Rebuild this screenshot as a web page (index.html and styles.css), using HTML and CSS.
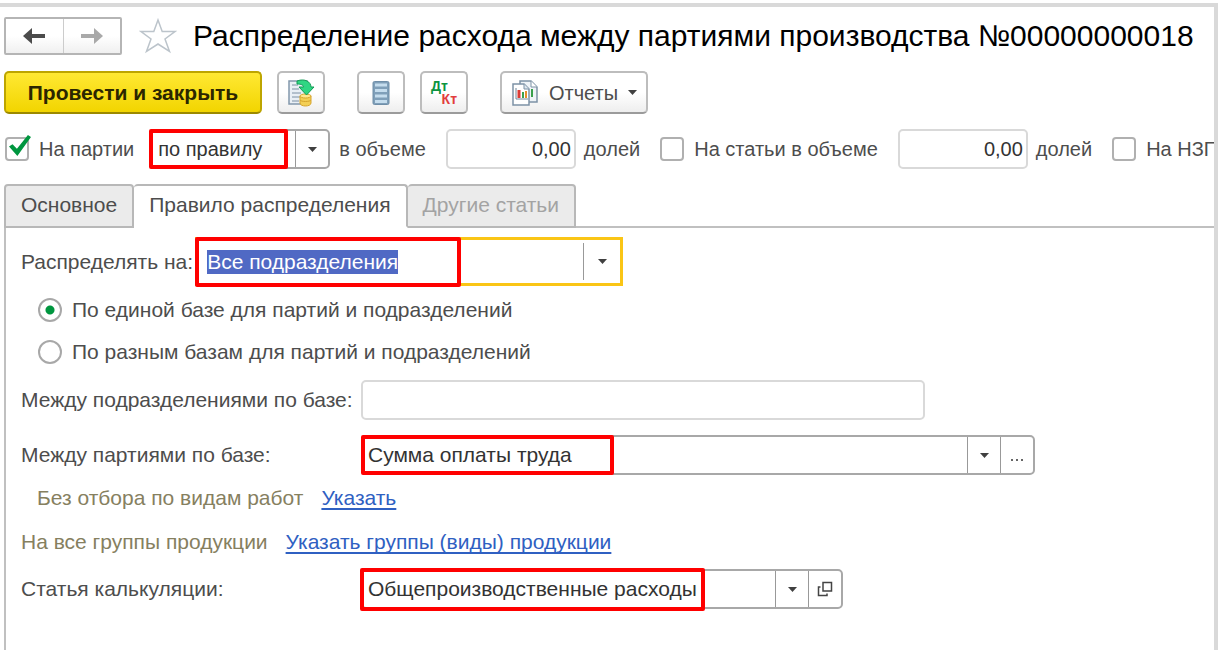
FILE: index.html
```html
<!DOCTYPE html>
<html lang="ru">
<head>
<meta charset="utf-8">
<title>Распределение расхода между партиями производства</title>
<link rel="stylesheet" href="styles.css">
</head>
<body>
<main class="window">
  <header class="header">
    <div class="history">
      <button class="history-btn" type="button" aria-label="Назад">
        <svg width="24" height="18" viewBox="0 0 24 18"><path d="M1 9 10 1V7H23V11H10V17Z" fill="#4b4b4b"/></svg>
      </button>
      <button class="history-btn" type="button" aria-label="Вперед">
        <svg width="24" height="18" viewBox="0 0 24 18"><path d="M23 9 14 1V7H1V11H14V17Z" fill="#a9a9a9"/></svg>
      </button>
    </div>
    <button class="star" type="button" aria-label="В избранное">
      <svg width="38" height="36" viewBox="0 0 38 36"><path d="M19 2 23.200 13.500H36L26 21 30.500 33.500 19 26 7.500 33.500 12 21 2 13.500H14.800Z" fill="#fff" stroke="#bcc4cb" stroke-width="1.500"/></svg>
    </button>
    <h1 class="title">Распределение расхода между партиями производства №00000000018</h1>
  </header>

  <div class="toolbar">
    <button class="btn btn-primary" type="button">Провести и закрыть</button>
    <button class="btn btn-icon" type="button" aria-label="Провести">
      <svg width="28" height="28" viewBox="0 0 28 28">
        <path d="M2 2H20V25H2Z" fill="#e9eff5" stroke="#8398ac" stroke-width="1.500"/>
        <path d="M5 6H11M5 10H12M5 14H14M5 18H13M5 22H12" stroke="#7d90a3"/>
        <path d="M13 17V24C13 28 24 28 24 24V17Z" fill="#f3cf55" stroke="#d6a52e"/>
        <ellipse cx="18.500" cy="17" rx="5.500" ry="2" fill="#ffe88f" stroke="#d6a52e"/>
        <path d="M13 21C14 23 23 23 24 21" fill="none" stroke="#d6a52e"/>
        <path d="M10 2C18 -1 24 3 24 8H27L19.500 16 12 8H16.500C16.500 6 14 5 10 5Z" fill="#2fd683" stroke="#139a55"/>
      </svg>
    </button>
    <button class="btn btn-icon btn-apart" type="button" aria-label="Список">
      <svg width="20" height="26" viewBox="0 0 20 26">
        <rect x="2" y="1.500" width="16" height="23" rx="1.500" fill="#7f9fb9" stroke="#6f8ea8"/>
        <path d="M4 5H16M4 10.500H16M4 16H16M4 21.500H16" stroke="#c5ddee" stroke-width="3"/>
      </svg>
    </button>
    <button class="btn btn-icon" type="button" aria-label="Проводки">
      <span class="dtkt"><span class="dt">Дт</span><span class="kt">Кт</span></span>
    </button>
    <button class="btn btn-reports" type="button">
      <svg width="28" height="28" viewBox="0 0 28 28">
        <path d="M9 2H20L26 8V23H9Z" fill="#eef3f7" stroke="#7d92a6" stroke-width="1.500"/>
        <path d="M20 2V8H26" fill="#fff" stroke="#7d92a6"/>
        <path d="M21 10V18" stroke="#39a04c" stroke-width="2"/>
        <path d="M2 5H13L18 10V26H2Z" fill="#fff" stroke="#7d92a6" stroke-width="1.500"/>
        <path d="M13 5V10H18" fill="#dce6ee" stroke="#7d92a6"/>
        <path d="M5 9V20H17" fill="none" stroke="#71869a"/>
        <path d="M8 11V19" stroke="#dc3c36" stroke-width="3"/>
        <path d="M12 13V19" stroke="#39a04c" stroke-width="2"/>
        <path d="M15 12V19" stroke="#e58e2b" stroke-width="2"/>
      </svg>
      <span>Отчеты</span>
      <svg class="caret" width="9" height="5" viewBox="0 0 9 5"><path d="M0 0H9L4.500 5Z"/></svg>
    </button>
  </div>

  <div class="options">
    <input class="check" type="checkbox" id="to-batches" checked>
    <label class="check-label" for="to-batches">На партии</label>
    <div class="combo combo-rule">
      <select class="rule-select" aria-label="Способ распределения на партии"><option>по правилу</option></select>
      <span class="combo-btn"><svg class="caret" width="9" height="5" viewBox="0 0 9 5"><path d="M0 0H9L4.500 5Z"/></svg></span>
      <span class="mark mark-rule"></span>
    </div>
    <label class="volume-label" for="volume-1">в объеме</label>
    <input class="field amount" id="volume-1" type="text" value="0,00">
    <span class="unit">долей</span>
    <input class="check" type="checkbox" id="to-items">
    <label class="check-label items-label" for="to-items">На статьи в объеме</label>
    <input class="field amount" type="text" value="0,00" aria-label="Объем на статьи">
    <span class="unit">долей</span>
    <input class="check" type="checkbox" id="to-wip">
    <label class="check-label" for="to-wip">На НЗП</label>
  </div>

  <div class="tabs" role="tablist">
    <button class="tab" type="button" role="tab">Основное</button>
    <button class="tab tab-active" type="button" role="tab" aria-selected="true">Правило распределения</button>
    <button class="tab" type="button" role="tab" disabled>Другие статьи</button>
  </div>

  <section class="panel" role="tabpanel">
    <div class="target-row">
      <label for="target">Распределять на:</label>
      <div class="combo combo-target">
        <input class="combo-input" id="target" type="text" value="Все подразделения" autofocus>
        <button class="combo-btn" type="button" aria-label="Выбрать"><svg class="caret" width="9" height="5" viewBox="0 0 9 5"><path d="M0 0H9L4.500 5Z"/></svg></button>
        <span class="mark mark-target"></span>
      </div>
    </div>

    <div class="radios">
      <label class="radio-row"><input class="radio" type="radio" name="base" checked>По единой базе для партий и подразделений</label>
      <label class="radio-row"><input class="radio" type="radio" name="base">По разным базам для партий и подразделений</label>
    </div>

    <div class="form-row">
      <label for="dept-base">Между подразделениями по базе:</label>
      <input class="field dept-field" id="dept-base" type="text">
    </div>

    <div class="form-row">
      <label for="batch-base">Между партиями по базе:</label>
      <div class="combo combo-batch">
        <input class="combo-input" id="batch-base" type="text" value="Сумма оплаты труда">
        <button class="combo-btn" type="button" aria-label="Выбрать"><svg class="caret" width="9" height="5" viewBox="0 0 9 5"><path d="M0 0H9L4.500 5Z"/></svg></button>
        <button class="combo-btn" type="button" aria-label="Показать все"><svg width="14" height="18" viewBox="0 0 14 18"><path d="M1 14H3M6 14H8M11 14H13" stroke="#666" stroke-width="2"/></svg></button>
        <span class="mark mark-batch"></span>
      </div>
    </div>

    <div class="link-row link-row-inset"><span>Без отбора по видам работ</span><a class="link" href="#works">Указать</a></div>
    <div class="link-row"><span>На все группы продукции</span><a class="link" href="#groups">Указать группы (виды) продукции</a></div>

    <div class="form-row">
      <label for="cost-item">Статья калькуляции:</label>
      <div class="combo combo-cost">
        <input class="combo-input" id="cost-item" type="text" value="Общепроизводственные расходы">
        <button class="combo-btn" type="button" aria-label="Выбрать"><svg class="caret" width="9" height="5" viewBox="0 0 9 5"><path d="M0 0H9L4.500 5Z"/></svg></button>
        <button class="combo-btn" type="button" aria-label="Открыть"><svg width="16" height="16" viewBox="0 0 16 16"><path d="M6 1.500H14.500V10H6ZM3.500 6H1.500V14.500H10V12.500" fill="none" stroke="#444" stroke-width="1.500"/></svg></button>
        <span class="mark mark-cost"></span>
      </div>
    </div>
  </section>
</main>
<script src="script.js"></script>
</body>
</html>
```
FILE: styles.css
```css
* { box-sizing: border-box; }

body {
  margin: 0;
  background: #fff;
  color: #4d4d4d;
  font: 20px/24px "Liberation Sans", Arial, sans-serif;
}

button, input, select {
  margin: 0;
  padding: 0;
  border: 0;
  background: none;
  color: inherit;
  font: inherit;
}

input:focus { outline: none; }
svg { display: block; flex: none; }
.caret { fill: #404040; }

.window {
  display: flex;
  flex-direction: column;
  min-height: calc(100vh - 3px);
  margin: 3px 3px 0 0;
  padding: 10px 0 0 4px;
  border-top: 4px solid #d9d9d9;
  border-right: 4px solid #d9d9d9;
  overflow: hidden;
}

.header { display: flex; align-items: center; height: 38px; white-space: nowrap; }

.history {
  display: flex;
  width: 118px;
  height: 38px;
  border: 2px solid #b5b5b5;
  border-radius: 2px;
  background: linear-gradient(#fff 50%, #f0f0f0);
}

.history-btn { display: flex; flex: 1; align-items: center; justify-content: center; }
.history-btn + .history-btn { border-left: 1px solid #ccc; }
.star { margin-left: 17px; }

.title { margin: 0 0 0 16px; color: #000; font-size: 30px; font-weight: 400; line-height: 36px; }

.toolbar { display: flex; gap: 15px; margin-top: 16px; }

.btn {
  display: flex;
  align-items: center;
  justify-content: center;
  height: 43px;
  border: 2px solid #bdbdbd;
  border-bottom-color: #9b9b9b;
  border-radius: 5px;
  background: linear-gradient(#fff 50%, #eee);
}

.btn-primary {
  width: 258px;
  border-color: #bda500;
  border-bottom-color: #9c8900;
  background: linear-gradient(#ffe833, #f2d500);
  color: #2b2600;
  font-size: 21px;
  font-weight: 700;
}

.btn-icon { width: 48px; }
.btn-apart { margin-left: 17px; }
.btn-reports { gap: 10px; width: 148px; margin-left: 17px; }

.dtkt { display: flex; flex-direction: column; width: 26px; font-size: 14px; font-weight: 700; line-height: 13px; }
.dt { align-self: flex-start; color: #0c9440; }
.kt { align-self: flex-end; color: #e23d3d; }

.options { display: flex; align-items: center; margin-top: 15px; white-space: nowrap; }
.options > * { flex: none; }

.check {
  position: relative;
  width: 24px;
  height: 24px;
  margin-left: 20px;
  border: 2px solid #b0b0b0;
  border-radius: 4px;
  appearance: none;
}

.check:first-child { margin-left: 1px; }

.check:checked::after {
  content: "";
  position: absolute;
  top: -4px;
  left: 2px;
  width: 22px;
  height: 21px;
  background: #00963f;
  clip-path: polygon(0 55%, 16% 44%, 36% 66%, 86% 0, 100% 10%, 38% 100%);
}

.check-label { margin-left: 10px; }
.items-label { margin-right: 20px; }
.volume-label { margin: 0 20px 0 9px; }
.unit { margin-left: 8px; }

.field { height: 40px; padding: 0 6px; border: 2px solid #d9d9d9; border-radius: 5px; }
.amount { width: 130px; padding: 0 3px; color: #333; text-align: right; }

.combo {
  position: relative;
  display: flex;
  height: 40px;
  border: 2px solid #a8a8a8;
  border-radius: 5px;
  color: #333;
}

.combo-input { flex: 1; min-width: 0; padding: 0 5px; }

.combo-btn {
  display: flex;
  flex: none;
  align-items: center;
  justify-content: center;
  width: 33px;
  border-left: 1px solid #999;
}

.combo-rule { width: 181px; margin-left: 15px; }
.rule-select { flex: 1; padding-left: 7px; appearance: none; }

/* Highlight frames over the fields */
.mark { position: absolute; border: 4px solid #f00; border-radius: 2px; pointer-events: none; }
.mark-rule { top: -2px; bottom: -2px; left: -2px; width: 139px; }
.mark-target { top: -3px; bottom: -4px; left: -3px; width: 266px; }
.mark-batch { top: -2px; bottom: -2px; left: -2px; width: 253px; }
.mark-cost { top: -3px; bottom: -4px; left: -3px; width: 345px; }

.tabs { display: flex; margin-top: 15px; box-shadow: inset 0 -2px #c0c0c0; font-size: 21px; }

.tab {
  height: 44px;
  padding: 0 15px 2px;
  border: 2px solid #b8b8b8;
  border-radius: 4px 4px 0 0;
  background: #ebebeb;
}

.tab + .tab { border-left-width: 0; }
.tab-active { border-bottom-color: #fff; background: #fff; }
.tab:disabled { color: #a3a3a3; }

.panel { flex: 1; padding: 9px 15px; border-left: 2px solid #c0c0c0; font-size: 21px; }

.target-row { display: flex; align-items: center; gap: 2px; }
.combo-target { width: 428px; height: 49px; border: 3px solid #fac515; border-radius: 0; }
.combo-target .combo-input { padding-left: 9px; }
.combo-target .combo-btn { width: 37px; height: 37px; margin: 3px 0; }
.combo-target ::selection { background: #5069c4; color: #fff; }

.radios { display: flex; flex-direction: column; gap: 18px; margin: 12px 0 16px 17px; }
.radio-row { display: flex; align-items: center; gap: 10px; }

.radio {
  width: 24px;
  height: 24px;
  border: 2px solid #a8a8a8;
  border-radius: 50%;
  appearance: none;
}

.radio:checked { background: radial-gradient(circle, #00963f 4px, #fff 5px); }

.form-row { display: grid; grid-template-columns: 340px 1fr; align-items: center; margin-bottom: 15px; }
.dept-field { width: 564px; }
.combo-batch { width: 674px; }
.combo-cost { width: 482px; }

.link-row { display: flex; gap: 18px; margin-bottom: 20px; color: #86805f; }
.link-row-inset { padding-left: 16px; margin-top: -4px; }
.link { color: #2f60c2; text-decoration-thickness: 2px; text-underline-offset: 3px; text-decoration-skip-ink: none; }
.link-row + .form-row { margin-top: -5px; }
```
FILE: script.js
```js
const target = document.getElementById("target");
target.focus();
target.select();
```
